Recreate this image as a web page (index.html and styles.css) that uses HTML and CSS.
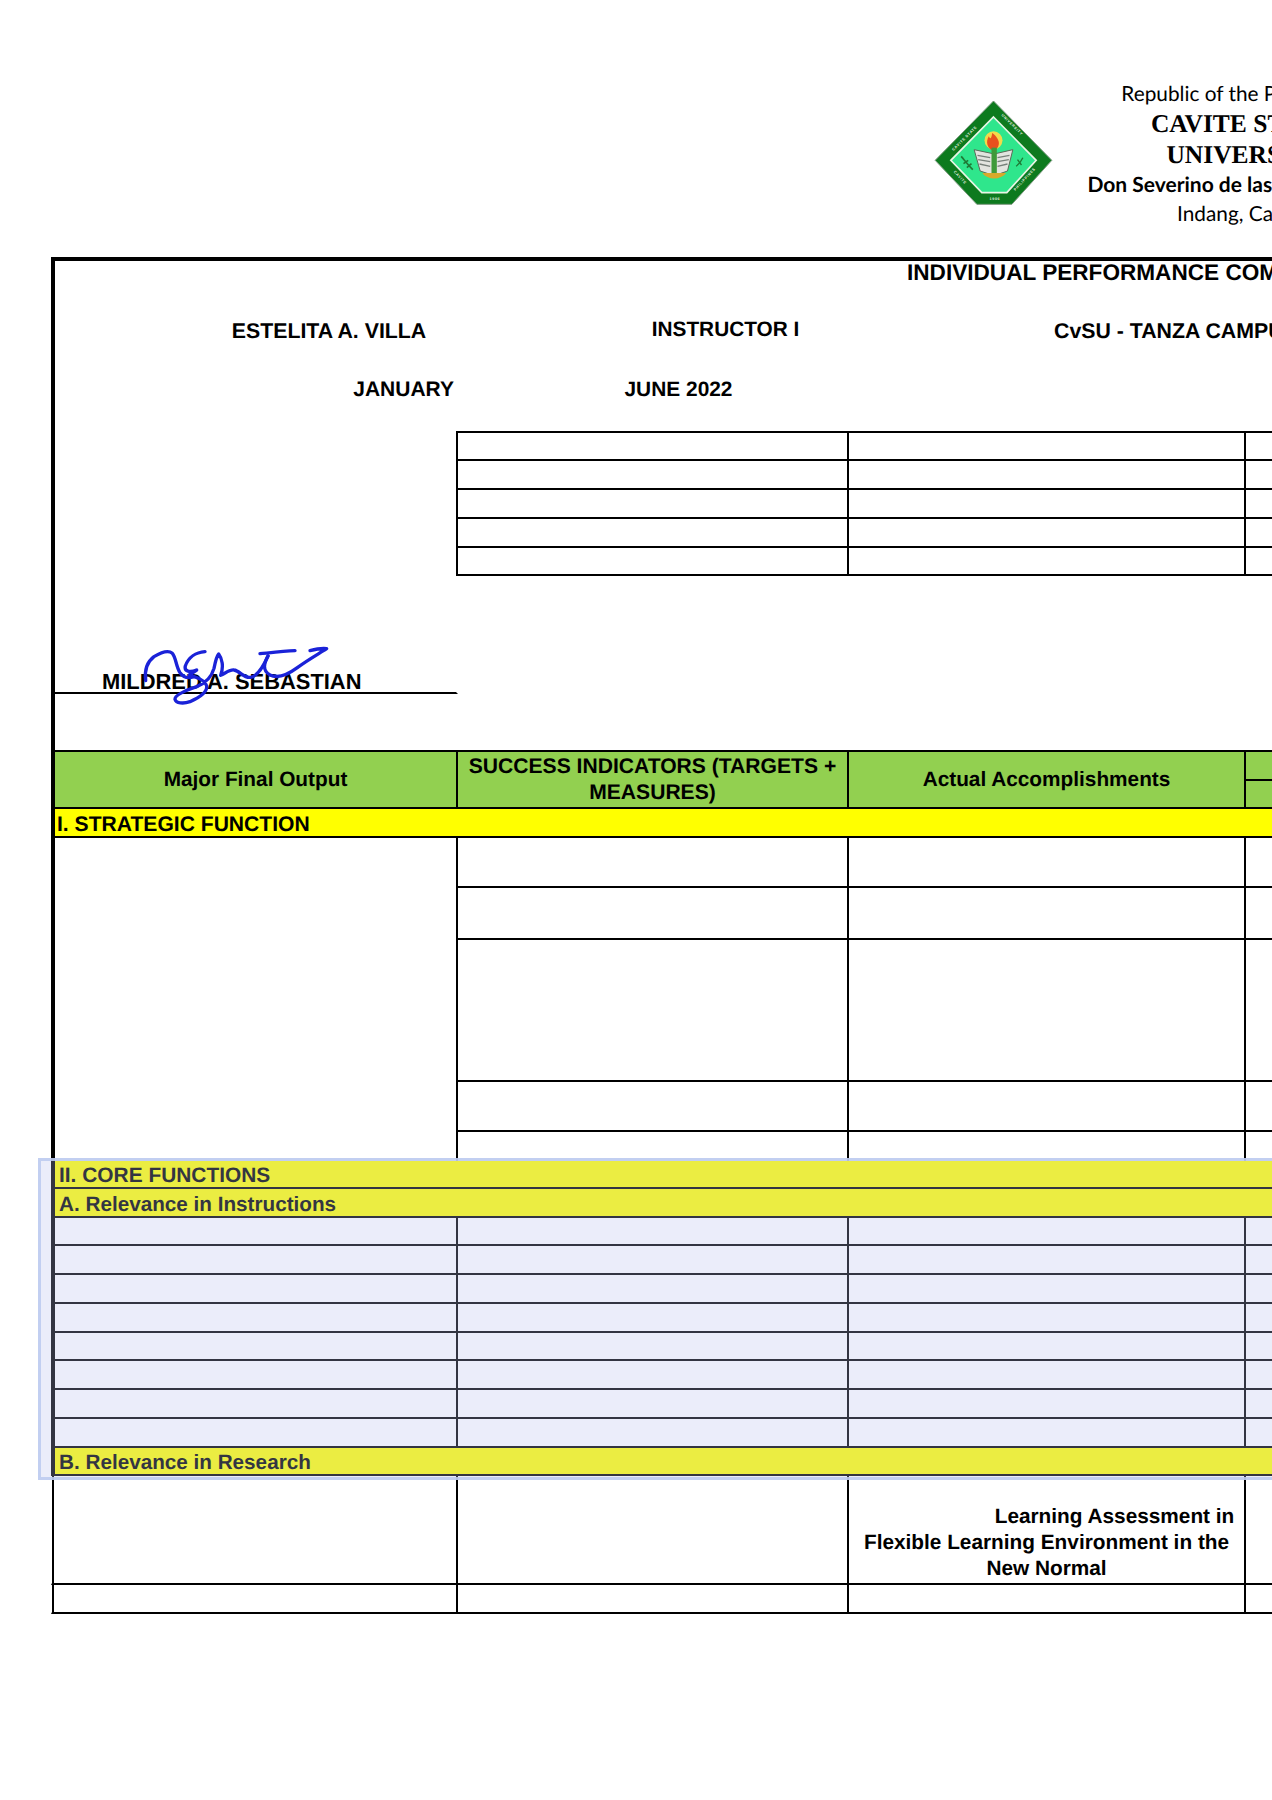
FILE: index.html
```html
<!DOCTYPE html>
<html lang="en">
<head>
<meta charset="utf-8">
<title>Individual Performance Commitment and Review</title>
<link rel="stylesheet" href="styles.css">
</head>
<body>
<header class="letterhead">
  <svg class="logo" viewBox="90 110 380 330" aria-label="Cavite State University seal">
    <polygon points="280,122 455,300 335,432 230,432 105,300" fill="#0d7a1e" stroke="#7d9a80" stroke-width="3"/>
    <polygon points="280,170 408,300 320,397 245,397 152,300" fill="#2fe68c" stroke="#e9f5e6" stroke-width="5"/>
    <circle cx="280" cy="240" r="27" fill="#f3d94a"/>
    <path d="M280 272C260 264 256 244 266 228C270 238 274 236 276 218C288 226 298 240 296 252C294 262 290 268 280 272Z" fill="#e8501e"/>
    <polygon points="222,268 278,280 286,280 338,268 322,332 282,346 240,332" fill="#e2e4df" stroke="#5b6b58" stroke-width="3"/>
    <path d="M232 285L270 292M234 298L270 304M238 311L270 318M292 292L328 285M292 304L326 298M292 318L322 311" stroke="#77807a" stroke-width="4"/>
    <rect x="274" y="262" width="16" height="80" fill="#3f9a3a"/>
    <path d="M246 338C262 360 302 360 318 338Z" fill="#d7a92c"/>
    <path d="M183 288C195 302 205 315 218 328M190 310L204 300M200 322L214 310" stroke="#1f7a35" stroke-width="5" fill="none"/>
    <path d="M368 292C362 305 356 312 348 318M352 298L364 314" stroke="#1f7a35" stroke-width="4" fill="none"/>
    <g class="logo-text">
      <text transform="translate(160 272) rotate(-45)">CAVITE STATE</text>
      <text transform="translate(303 165) rotate(45)">UNIVERSITY</text>
      <text transform="translate(160 335) rotate(47)">CAVITE</text>
      <text transform="translate(345 392) rotate(-47)">PHILIPPINES</text>
      <text x="268" y="420">1906</text>
    </g>
  </svg>
  <div class="campus">
    <div class="campus-line">Republic of the Philippines</div>
    <div class="campus-name">CAVITE STATE</div>
    <div class="campus-name campus-name-second">UNIVERSITY</div>
    <div class="campus-line campus-strong">Don Severino de las Alas Campus</div>
    <div class="campus-line">Indang, Cavite</div>
  </div>
</header>

<table class="form">
  <colgroup>
    <col class="c1"><col class="c2"><col class="c3"><col class="c4">
  </colgroup>
  <tbody>
    <tr class="h42"><td colspan="4" class="e title">INDIVIDUAL PERFORMANCE COMMITMENT AND REVIEW (IPCR)</td></tr>
    <tr class="h57">
      <td class="e meta name-cell">ESTELITA A. VILLA</td>
      <td class="meta role-cell">INSTRUCTOR I</td>
      <td colspan="2" class="meta campus-cell">CvSU - TANZA CAMPUS</td>
    </tr>
    <tr class="h71">
      <td class="e meta from-cell">JANUARY</td>
      <td class="meta to-cell">JUNE 2022</td>
      <td></td>
      <td></td>
    </tr>
    <tr class="h30"><td rowspan="5" class="e r"></td><td class="t b r"></td><td class="t b r"></td><td class="t b"></td></tr>
    <tr class="h29"><td class="b r"></td><td class="b r"></td><td class="b"></td></tr>
    <tr class="h29"><td class="b r"></td><td class="b r"></td><td class="b"></td></tr>
    <tr class="h29"><td class="b r"></td><td class="b r"></td><td class="b"></td></tr>
    <tr class="h28"><td class="b r"></td><td class="b r"></td><td class="b"></td></tr>
    <tr class="h118"><td class="e b signer">MILDRED A. SEBASTIAN</td><td></td><td></td><td></td></tr>
    <tr class="h58"><td class="e b"></td><td class="b"></td><td class="b"></td><td class="b"></td></tr>
    <tr class="h29">
      <td rowspan="2" class="e b r head">Major Final Output</td>
      <td rowspan="2" class="b r head head-caps">SUCCESS INDICATORS (TARGETS + MEASURES)</td>
      <td rowspan="2" class="b r head">Actual Accomplishments</td>
      <td class="b head"></td>
    </tr>
    <tr class="h28"><td class="b head"></td></tr>
    <tr class="h29"><td colspan="4" class="e b band">I. STRATEGIC FUNCTION</td></tr>
    <tr class="h50"><td rowspan="5" class="e r"></td><td class="b r"></td><td class="b r"></td><td class="b"></td></tr>
    <tr class="h52"><td class="b r"></td><td class="b r"></td><td class="b"></td></tr>
    <tr class="h142"><td class="b r"></td><td class="b r"></td><td class="b"></td></tr>
    <tr class="h50"><td class="b r"></td><td class="b r"></td><td class="b"></td></tr>
    <tr class="h29"><td class="r"></td><td class="r"></td><td></td></tr>
    <tr class="h28"><td colspan="4" class="e b band band-core">II. CORE FUNCTIONS</td></tr>
    <tr class="h29"><td colspan="4" class="e b band band-sub">A. Relevance in Instructions</td></tr>
    <tr class="h28"><td class="e b r"></td><td class="b r"></td><td class="b r"></td><td class="b"></td></tr>
    <tr class="h29"><td class="e b r"></td><td class="b r"></td><td class="b r"></td><td class="b"></td></tr>
    <tr class="h29"><td class="e b r"></td><td class="b r"></td><td class="b r"></td><td class="b"></td></tr>
    <tr class="h29"><td class="e b r"></td><td class="b r"></td><td class="b r"></td><td class="b"></td></tr>
    <tr class="h28"><td class="e b r"></td><td class="b r"></td><td class="b r"></td><td class="b"></td></tr>
    <tr class="h29"><td class="e b r"></td><td class="b r"></td><td class="b r"></td><td class="b"></td></tr>
    <tr class="h29"><td class="e b r"></td><td class="b r"></td><td class="b r"></td><td class="b"></td></tr>
    <tr class="h29"><td class="e b r"></td><td class="b r"></td><td class="b r"></td><td class="b"></td></tr>
    <tr class="h28"><td colspan="4" class="e b band band-sub">B. Relevance in Research</td></tr>
    <tr class="h109">
      <td class="thin b r"></td>
      <td class="b r"></td>
      <td class="b r accomplishment"><span class="first-line">Learning Assessment in</span> Flexible Learning Environment in the New Normal</td>
      <td class="b"></td>
    </tr>
    <tr class="h29"><td class="thin b r"></td><td class="b r"></td><td class="b r"></td><td class="b"></td></tr>
  </tbody>
</table>

<svg class="signature" viewBox="0 0 1320 720" aria-hidden="true">
  <path d="M317 182C313 150 322 125 342 110C362 98 385 90 397 100C408 112 408 140 420 158C430 172 445 176 462 170"/>
  <path d="M495 95C468 97 445 112 436 138C432 155 450 158 470 150L448 165C470 172 495 180 500 198C502 215 480 232 450 245C430 252 408 250 405 238C404 225 435 212 470 200C495 190 515 170 522 145C526 125 530 108 536 102C546 115 552 140 542 166C556 160 570 148 582 150C600 152 610 175 632 172C655 168 672 135 684 108"/>
  <path d="M660 101C692 98 730 94 765 92"/>
  <path d="M684 108C672 130 666 150 690 165C712 176 738 168 772 143C800 122 835 102 860 86C845 84 825 88 810 92"/>
</svg>
<div class="selection" aria-hidden="true"></div>
</body>
</html>
```
FILE: styles.css
```css
html, body {
  margin: 0;
  height: 1800px;
  overflow: hidden;
  background: #fff;
}
body {
  position: relative;
  font-family: "Liberation Sans", Arial, sans-serif;
  color: #000;
  text-rendering: geometricPrecision;
}
.letterhead {
  display: flex;
  height: 257px;
  padding: 97px 0 0 930px;
  box-sizing: border-box;
}
.logo {
  flex: none;
  width: 127px;
  height: 110px;
}
.logo-text text {
  font: 700 11px "Liberation Sans", sans-serif;
  fill: #e8f3e2;
  letter-spacing: 2px;
}
.campus {
  flex: none;
  width: 380px;
  margin: -18px 0 0 -5px;
  text-align: center;
}
.campus-line {
  font: 20.8px/29px Lato, sans-serif;
}
.campus-strong {
  font-size: 21px;
  font-weight: 700;
}
.campus-name {
  font: 700 25.5px/31px "Liberation Serif", serif;
}
.campus-name-second {
  padding-left: 9px;
}
.form {
  margin-left: 51px;
  width: 1495px;
  table-layout: fixed;
  border-collapse: separate;
  border-spacing: 0;
  border-top: 4px solid #000;
  font-size: 21.3px;
  font-weight: 700;
}
.c1 { width: 407px; }
.c2 { width: 391px; }
.c3 { width: 397px; }
.c4 { width: 300px; }
.form td {
  box-sizing: border-box;
  padding: 0;
  overflow: visible;
  white-space: normal;
}
.h28 { height: 28px; }
.h29 { height: 29px; }
.h30 { height: 30px; }
.h42 { height: 42px; }
.h50 { height: 50px; }
.h52 { height: 52px; }
.h57 { height: 57px; }
.h58 { height: 58px; }
.h71 { height: 71px; }
.h109 { height: 109px; }
.h118 { height: 118px; }
.h142 { height: 142px; }
.form .e { border-left: 4px solid #000; }
.form .thin {
  border-left: 1px solid transparent;
  box-shadow: inset 2px 0 #000;
}
.form .t { border-top: 2px solid #000; }
.form .b { border-bottom: 2px solid #000; }
.form .r { border-right: 2px solid #000; }
.form .title {
  vertical-align: top;
  padding-left: 852px;
  white-space: nowrap;
  font-size: 22.6px;
  line-height: 24px;
}
.form .meta {
  vertical-align: top;
  line-height: 24px;
  white-space: nowrap;
}
.form .name-cell { padding: 16px 0 0 145px; text-align: center; }
.form .role-cell { padding: 15px 0 0 144px; text-align: center; font-size: 20.8px; }
.form .campus-cell { padding: 16px 0 0 205px; }
.form .from-cell { padding: 18px 4px 0 0; text-align: right; font-size: 21px; }
.form .to-cell { padding: 18px 0 0 50px; text-align: center; font-size: 20.9px; }
.form .signer {
  vertical-align: bottom;
  padding-left: 47px;
  border-right: 2px solid transparent;
  font-size: 21.9px;
  line-height: 20px;
  white-space: nowrap;
}
.form .head {
  background: #92d050;
  text-align: center;
  font-size: 20.8px;
  line-height: 25.5px;
}
.form .head-caps { font-size: 21.1px; }
.form .band {
  background: #ffff00;
  padding: 4px 0 0 2px;
  font-size: 21.1px;
  line-height: 20px;
  white-space: nowrap;
}
.form .band-core { padding-left: 4px; font-size: 20.9px; }
.form .band-sub { padding-left: 4px; font-size: 20.7px; }
.form .accomplishment {
  padding: 26px 4px 0;
  text-align: center;
  font-size: 20.8px;
  line-height: 26px;
}
.first-line {
  display: block;
  padding-left: 136px;
}
.signature {
  position: absolute;
  left: 40px;
  top: 620px;
  width: 440px;
  height: 240px;
  fill: none;
  stroke: #1a22d8;
  stroke-width: 10;
  stroke-linecap: round;
  stroke-linejoin: round;
}
.selection {
  position: absolute;
  left: 38px;
  top: 1158px;
  width: 1400px;
  height: 322px;
  box-sizing: border-box;
  border: 3px solid rgba(190, 203, 240, 0.9);
  background: rgba(183, 190, 236, 0.28);
}
```
